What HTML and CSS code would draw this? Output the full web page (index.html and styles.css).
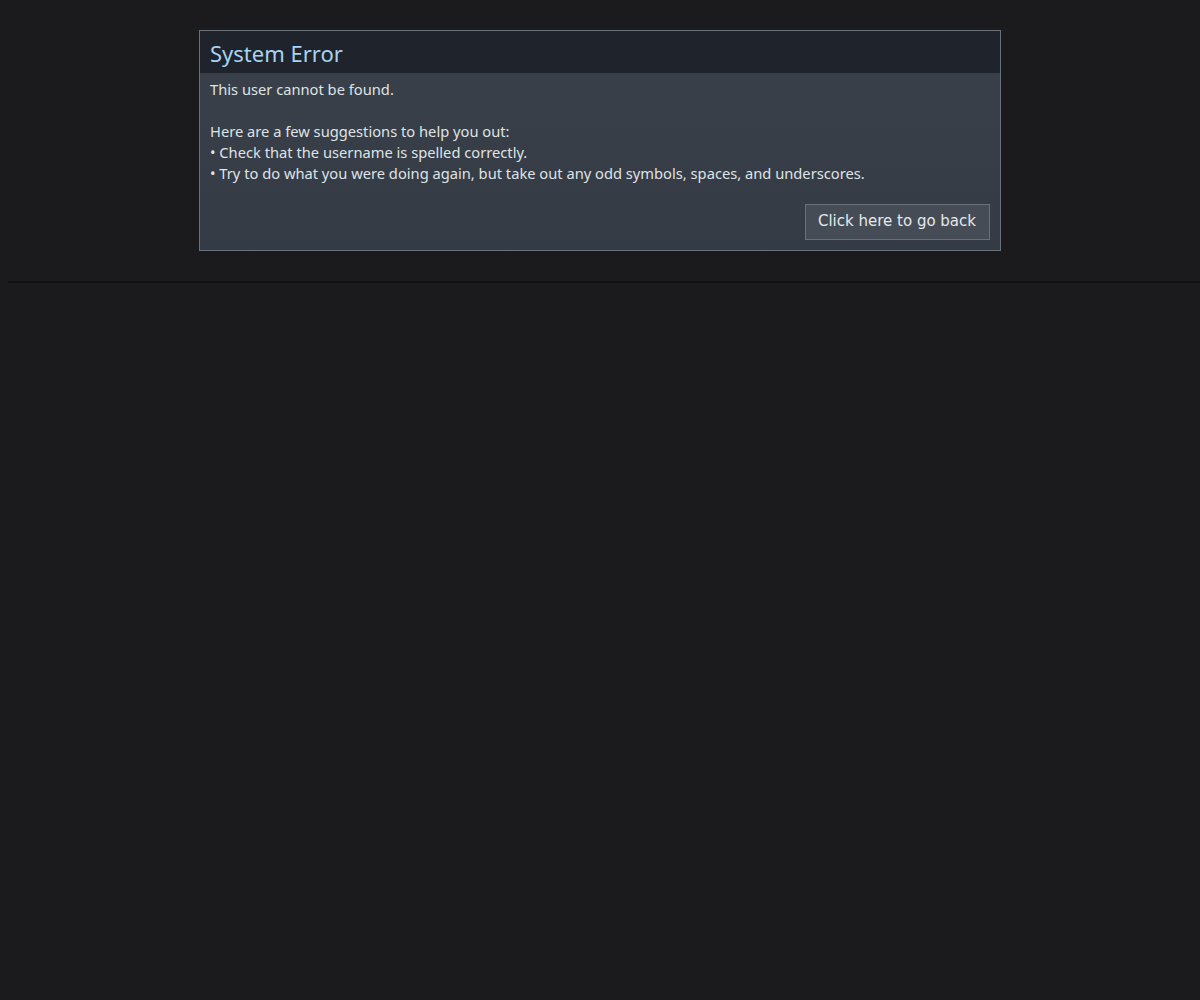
FILE: index.html
```html
<!DOCTYPE html>
<html>
<head>
<meta charset="utf-8">
<link rel="stylesheet" href="styles.css">
</head>
<body>
<div class="page">
  <div class="error-box">
    <div class="error-head"><h2>System Error</h2></div>
    <div class="error-body">
      <div class="msg">This user cannot be found.<br><br>Here are a few suggestions to help you out:<br>• Check that the username is spelled correctly.<br>• Try to do what you were doing again, but take out any odd symbols, spaces, and underscores.</div>
      <div class="actions"><a class="btn" href="#">Click here to go back</a></div>
    </div>
  </div>
</div>
<div class="footer-line"></div>
</body>
</html>
```
FILE: styles.css
```css
html, body {
  margin: 0;
  padding: 0;
  background: #1b1b1d;
  font-family: "Noto Sans", "Open Sans", sans-serif;
}
.page {
  padding-top: 30px;
  padding-bottom: 30px;
}
.error-box {
  width: 800px;
  margin: 0 auto;
  border: 1px solid #6b717a;
  background: linear-gradient(180deg, #3a414a 0%, #353b44 100%);
}
.error-head {
  background: #1f232b;
  height: 42px;
  padding: 0 10px;
  display: flex;
  align-items: center;
}
.error-head h2 {
  margin: 0;
  font-weight: normal;
  font-size: 22px;
  color: #a8d3f0;
  line-height: 1;
  padding-top: 2px;
}
.error-body {
  padding: 6px 10px 10px 10px;
}
.msg {
  font-size: 14.7px;
  line-height: 21px;
  color: #dfe3e6;
}
.actions {
  display: flex;
  justify-content: flex-end;
  margin-top: 20px;
}
.btn {
  display: inline-block;
  font-family: "DejaVu Sans", sans-serif;
  font-size: 15px;
  color: #e6e8ea;
  text-decoration: none;
  background: #454c56;
  border: 1px solid #6a7079;
  padding: 7px 13px 8px 12px;
  line-height: 19px;
}
.footer-line {
  margin-left: 8px;
  height: 2px;
  background: #111213;
}
```
